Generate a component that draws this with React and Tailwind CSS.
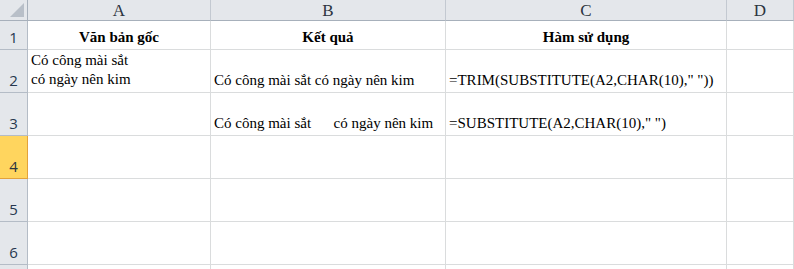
const cols = [
  { key: 'A', w: 'w-[183px]' },
  { key: 'B', w: 'w-[235px]' },
  { key: 'C', w: 'w-[281px]' },
  { key: 'D', w: 'flex-1' },
];

const rows = [
  {
    n: 1,
    h: 'h-[29px]',
    cells: [
      <span className="font-bold w-full text-center">Văn bản gốc</span>,
      <span className="font-bold w-full text-center">Kết quả</span>,
      <span className="font-bold w-full text-center">Hàm sử dụng</span>,
      null,
    ],
  },
  {
    n: 2,
    h: 'h-[43px]',
    cells: [
      <span className="leading-[19px]">Có công mài sắt<br />có ngày nên kim</span>,
      <span>Có công mài sắt có ngày nên kim</span>,
      <span>=TRIM(SUBSTITUTE(A2,CHAR(10)," "))</span>,
      null,
    ],
  },
  {
    n: 3,
    h: 'h-[43px]',
    cells: [
      null,
      <span className="whitespace-pre">{'Có công mài sắt      có ngày nên kim'}</span>,
      <span>=SUBSTITUTE(A2,CHAR(10)," ")</span>,
      null,
    ],
  },
  { n: 4, h: 'h-[43px]', cells: [null, null, null, null], active: true },
  { n: 5, h: 'h-[43px]', cells: [null, null, null, null] },
  { n: 6, h: 'h-[43px]', cells: [null, null, null, null] },
  { n: '', h: 'h-[43px]', cells: [null, null, null, null] },
];

function RowHead({ n, active }) {
  return (
    <div
      className={`w-[28px] shrink-0 flex items-end justify-center pb-[1px] border-r border-b text-[15px] font-['Open_Sans',sans-serif] ${
        active
          ? 'bg-[#ffd55e] border-[#e3a23a] text-[#2b3440]'
          : 'bg-[#e4e7eb] border-[#b4bcc6] text-[#26374f]'
      }`}
    >
      {n}
    </div>
  );
}

export default function App() {
  return (
    <div className="w-[794px] h-[269px] overflow-hidden bg-white font-['Liberation_Serif',serif] text-[15px] text-black">
      <div className="flex h-[21px]">
        <div className="w-[28px] shrink-0 bg-[#e4e7eb] border-r border-b border-[#a7b0bb] relative">
          <svg className="absolute right-[3px] bottom-[3px]" width="14" height="14" viewBox="0 0 14 14">
            <polygon points="14,0 14,14 0,14" fill="#b8bfc8" />
          </svg>
        </div>
        {cols.map((c) => (
          <div
            key={c.key}
            className={`${c.w} shrink-0 bg-[#e4e7eb] border-r border-b border-r-[#c3c9d1] border-b-[#a7b0bb] flex items-center justify-center text-[#2c3440] text-[17px] leading-none`}
          >
            {c.key}
          </div>
        ))}
      </div>
      {rows.map((r, ri) => (
        <div key={ri} className={`flex ${r.h}`}>
          <RowHead n={r.n} active={r.active} />
          {cols.map((c, i) => (
            <div
              key={c.key}
              className={`${c.w} shrink-0 border-r border-b border-[#dadcdd] flex items-end px-[3px] pb-[3px] leading-[18px] overflow-visible whitespace-nowrap`}
            >
              {r.cells[i]}
            </div>
          ))}
        </div>
      ))}
    </div>
  );
}
